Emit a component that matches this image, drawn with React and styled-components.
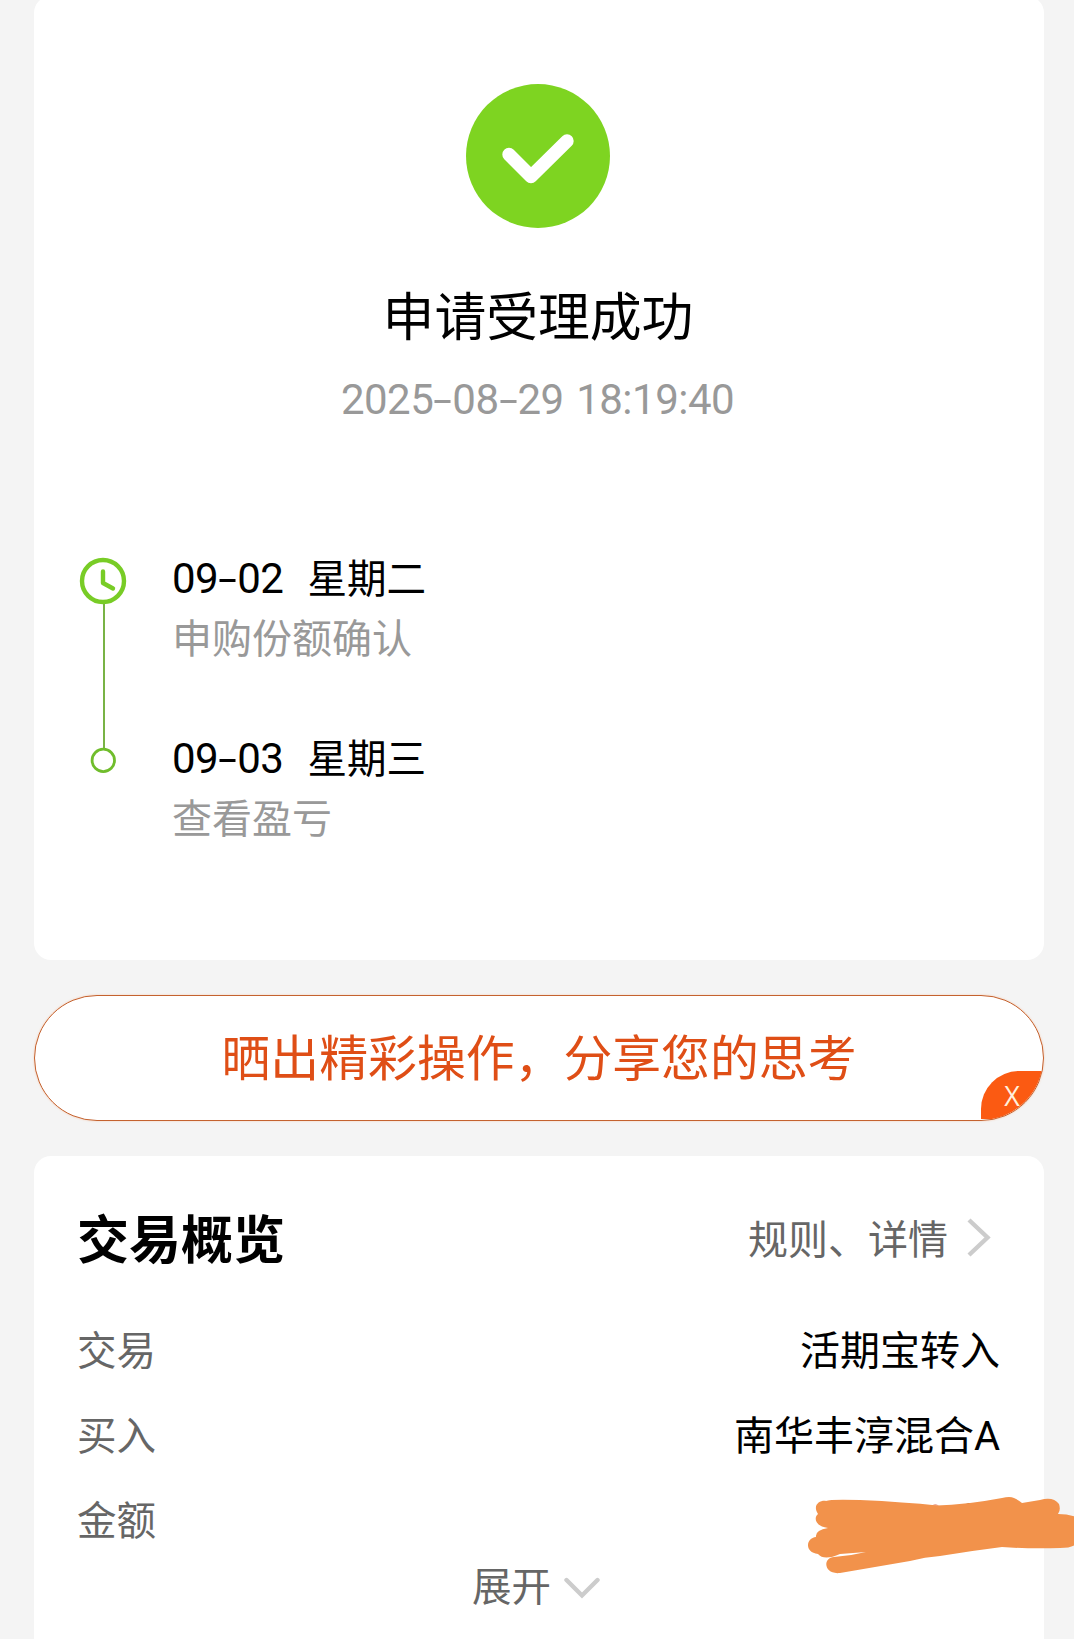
import React from "react";
import styled, { createGlobalStyle } from "styled-components";

const GlobalStyle = createGlobalStyle`
  * { box-sizing: border-box; }
  html, body { margin: 0; padding: 0; background: #f4f4f4; }
  body {
    font-family: "Noto Sans CJK SC", sans-serif;
    color: #000;
    overflow: hidden;
  }
`;

const Page = styled.main`
  position: relative;
  width: 1074px;
  height: 1639px;
  padding: 0 30px 0 34px;
  display: flex;
  flex-direction: column;
  overflow: hidden;
`;

const ResultCard = styled.section`
  flex: none;
  height: 964px;
  margin-top: -4px;
  padding-top: 88px;
  background: #fff;
  border-radius: 17px;
  display: flex;
  flex-direction: column;
`;

const SuccessIcon = styled.svg`
  display: block;
  width: 144px;
  height: 144px;
  margin: 0 auto;
  transform: translateX(-1px);
`;

const Title = styled.h1`
  margin: 48px 0 0;
  padding-right: 2px;
  font-size: 51.8px;
  line-height: 76px;
  font-weight: 400;
  text-align: center;
`;

const Digits = styled.span`
  font-family: Roboto, sans-serif;
  font-size: 42px;
  letter-spacing: -0.5px;
  word-spacing: 2.5px;
  white-space: pre;
`;

const DashBox = styled.span`
  display: inline-block;
  width: 19px;
  text-align: center;
  letter-spacing: 0;
  transform: translateY(1px) scale(1.6, 0.95);
`;

const Timestamp = styled.div`
  height: 50px;
  line-height: 50px;
  margin-top: 23px;
  padding-right: 3px;
  display: flex;
  justify-content: center;
  color: #999;
`;

const Timeline = styled.ol`
  list-style: none;
  margin: 121px 0 0;
  padding: 0 0 0 45px;
`;

const Step = styled.li`
  display: flex;
  height: 180px;
`;

const Rail = styled.div`
  width: 48px;
  flex: none;
  display: flex;
  flex-direction: column;
  align-items: center;
  padding-top: ${(p) => p.$top}px;
`;

const RailIcon = styled.svg`
  display: block;
  flex: none;
`;

const RailLine = styled.div`
  flex: none;
  width: 2px;
  height: 144px;
  margin: -1px 0 0 1px;
  background: #79b345;
`;

const StepBody = styled.div`
  margin-left: 45px;
`;

const StepDate = styled.div`
  height: 60px;
  line-height: 60px;
  font-size: 39.6px;
  display: flex;
  align-items: baseline;
`;

const Weekday = styled.span`
  margin-left: 24px;
`;

const StepNote = styled.div`
  line-height: 60px;
  font-size: 40px;
  color: #999;
`;

const ShareBanner = styled.div`
  position: relative;
  flex: none;
  height: 126px;
  margin-top: 35px;
  border: 1px solid #c4622f;
  border-radius: 63px;
  background: #fff;
  box-shadow: 0 0 2px rgba(250, 150, 90, 0.45);
  overflow: hidden;
  display: flex;
  align-items: center;
  justify-content: center;
  font-size: 48.85px;
  color: #df4e16;
`;

const BannerText = styled.span`
  line-height: 72px;
  padding-bottom: 6px;
`;

const CloseButton = styled.button`
  position: absolute;
  right: 0;
  bottom: 1px;
  width: 62px;
  height: 48px;
  padding: 2px 0 0;
  border: 0;
  border-radius: 38px 0 0 0;
  background: #fb5a12;
  color: #fff0dc;
  font: 400 27px/46px "Open Sans", sans-serif;
  text-align: center;
`;

const OverviewCard = styled.section`
  flex: none;
  height: 520px;
  margin-top: 35px;
  padding: 45px 44px 0 43px;
  background: #fff;
  border-radius: 17px;
`;

const OverviewHeader = styled.header`
  height: 72px;
  display: flex;
  align-items: center;
  justify-content: space-between;
`;

const OverviewTitle = styled.h2`
  margin: 0;
  font-size: 52px;
  line-height: 72px;
  font-weight: 700;
`;

const DetailLink = styled.a`
  display: flex;
  align-items: center;
  gap: 19px;
  padding-right: 9px;
  font-size: 40px;
  line-height: 60px;
  color: #666;
`;

const Rows = styled.dl`
  margin: 32px 0 0;
`;

const Row = styled.div`
  height: 85px;
  display: flex;
  align-items: center;
  justify-content: space-between;
  font-size: 40px;
`;

const Label = styled.dt`
  font-size: 39.5px;
  color: #666;
`;

const Value = styled.dd`
  margin: 0;
  padding-top: 8px;
  font-family: Roboto, "Noto Sans CJK SC", sans-serif;
  line-height: 60px;
`;

const Expand = styled.div`
  display: flex;
  align-items: center;
  justify-content: center;
  gap: 13px;
  margin-top: -6px;
  padding-right: 5px;
  font-size: 39.5px;
  line-height: 60px;
  color: #666;
`;

const ExpandChevron = styled.svg`
  margin-top: 7px;
`;

const Scribble = styled.svg`
  position: absolute;
  left: 800px;
  top: 1490px;
  width: 274px;
  height: 90px;
`;

function NumericText({ text }) {
  return (
    <Digits>
      {text.split(/(-)/).map((part, i) =>
        part === "-" ? <DashBox key={i}>-</DashBox> : part
      )}
    </Digits>
  );
}

function ClockIcon() {
  return (
    <RailIcon width="48" height="48" viewBox="0 0 48 48" fill="none" stroke="#78cc26">
      <circle cx="24" cy="24" r="21" strokeWidth="4.4" />
      <path d="M24 14.5v11.5l10 5.5" strokeWidth="4.4" strokeLinecap="round" strokeLinejoin="round" />
    </RailIcon>
  );
}

function DotIcon() {
  return (
    <RailIcon width="26" height="26" viewBox="0 0 26 26" fill="none" stroke="#70bd2c">
      <circle cx="13.3" cy="13.4" r="11.2" strokeWidth="2.8" />
    </RailIcon>
  );
}

const rows = [
  ["交易", "活期宝转入"],
  ["买入", "南华丰淳混合A"],
  ["金额", ""],
];

export default function App() {
  return (
    <Page>
      <GlobalStyle />
      <ResultCard>
        <SuccessIcon viewBox="0 0 144 144">
          <circle cx="72" cy="72" r="72" fill="#7ed421" />
          <path
            d="M43 70.5L65 92.5L101 57"
            fill="none"
            stroke="#fff"
            strokeWidth="13.4"
            strokeLinecap="round"
            strokeLinejoin="round"
          />
        </SuccessIcon>
        <Title>申请受理成功</Title>
        <Timestamp>
          <NumericText text="2025-08-29 18:19:40" />
        </Timestamp>
        <Timeline>
          <Step>
            <Rail $top={11}>
              <ClockIcon />
              <RailLine />
            </Rail>
            <StepBody>
              <StepDate>
                <NumericText text="09-02" />
                <Weekday>星期二</Weekday>
              </StepDate>
              <StepNote>申购份额确认</StepNote>
            </StepBody>
          </Step>
          <Step>
            <Rail $top={21}>
              <DotIcon />
            </Rail>
            <StepBody>
              <StepDate>
                <NumericText text="09-03" />
                <Weekday>星期三</Weekday>
              </StepDate>
              <StepNote>查看盈亏</StepNote>
            </StepBody>
          </Step>
        </Timeline>
      </ResultCard>

      <ShareBanner>
        <BannerText>晒出精彩操作，分享您的思考</BannerText>
        <CloseButton>X</CloseButton>
      </ShareBanner>

      <OverviewCard>
        <OverviewHeader>
          <OverviewTitle>交易概览</OverviewTitle>
          <DetailLink>
            规则、详情
            <svg width="24" height="40" viewBox="0 0 24 40" fill="none" stroke="#ccc" strokeWidth="4.4">
              <path d="M2 3L20.5 20.5L2 38" />
            </svg>
          </DetailLink>
        </OverviewHeader>
        <Rows>
          {rows.map(([label, value]) => (
            <Row key={label}>
              <Label>{label}</Label>
              <Value>{value}</Value>
            </Row>
          ))}
        </Rows>
        <Expand>
          展开
          <ExpandChevron width="36" height="22" viewBox="0 0 36 22" fill="none" stroke="#ccc" strokeWidth="4.4" strokeLinecap="round">
            <path d="M2.5 3L18 18.5L33.5 3" />
          </ExpandChevron>
        </Expand>
      </OverviewCard>

      <Scribble viewBox="800 1490 274 90">
        <path d="M932 1505.5q3-2 7 0z" fill="#d8573a" />
        <path d="M966 1504l3-1h5l-2 2z" fill="#7a4a2a" />
        <path
          fill="#f2924b"
          d="M826 1501Q830 1499 860 1500Q905 1502 937 1505.5Q965 1505 1002 1498Q1010 1496 1014 1498Q1019 1500 1022 1503L1040 1500Q1053 1496 1059 1504Q1061 1510 1058 1514Q1068 1514 1076 1517V1544Q1072 1548 1060 1548Q1030 1549 1002 1547Q970 1551 940 1556Q925 1557 910 1561L840 1573C824 1575 822 1558 834 1557Q850 1556 866 1552L840 1554Q824 1561 818 1554C804 1552 806 1538 816 1537Q815 1530 828 1528C814 1526 814 1517 818 1514C812 1505 820 1500 826 1501Z"
        />
      </Scribble>
    </Page>
  );
}
